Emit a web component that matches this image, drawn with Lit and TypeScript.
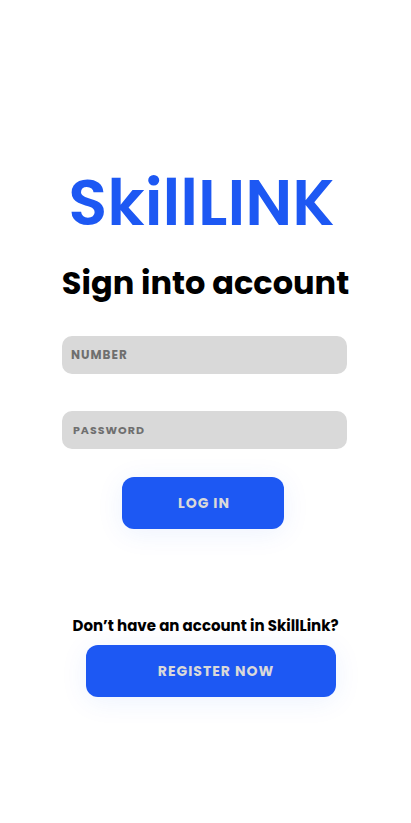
import { LitElement, html, css } from "lit";
import { customElement } from "lit/decorators.js";

@customElement("app-root")
export class AppRoot extends LitElement {
  static styles = css`
    :host {
      display: block;
      min-height: 100vh;
      background: #fff;
      color: #000;
      font-family: Poppins, Inter, "Open Sans", sans-serif;
    }
    * { box-sizing: border-box; margin: 0; }
    main {
      display: flex;
      flex-direction: column;
      align-items: center;
      padding: 155px 24px 48px;
      white-space: nowrap;
    }
    .brand {
      font-size: 64px;
      line-height: 96px;
      font-weight: 600;
      color: #1d58f3;
      margin-right: 8px;
    }
    .title {
      font-size: 32px;
      line-height: 48px;
      font-weight: 700;
      margin-top: 8px;
    }
    form {
      width: 100%;
      display: flex;
      flex-direction: column;
      align-items: center;
      margin-top: 29px;
      padding-right: 2px;
    }
    .field {
      width: 100%;
      max-width: 285px;
      height: 38px;
      border: 0;
      border-radius: 10px;
      padding: 0 9px;
      background: #d9d9d9;
      color: #333;
      font: 700 12px/18px Poppins, Inter, sans-serif;
      letter-spacing: 1px;
    }
    .field::placeholder { color: #6f6f6f; opacity: 1; }
    .password {
      margin-top: 37px;
      padding: 0 11px;
      font-size: 11px;
    }
    .button {
      width: 100%;
      height: 52px;
      border: 0;
      border-radius: 12px;
      background: #1d58f3;
      color: #d9d9d9;
      font: 700 14px/20px Poppins, Inter, sans-serif;
      letter-spacing: 1px;
      box-shadow: 0 4px 28px rgba(29, 88, 243, 0.08);
    }
    .login {
      max-width: 162px;
      margin: 28px 3px 0 0;
      padding: 0 0 0 2px;
    }
    .register {
      max-width: 250px;
      margin: 7px 0 0 11px;
      padding: 0 0 0 10px;
    }
    .prompt {
      font-size: 15px;
      line-height: 24px;
      font-weight: 700;
      margin-top: 85px;
    }
  `;

  render() {
    return html`
      <main>
        <h1 class="brand">SkillLINK</h1>
        <h2 class="title">Sign into account</h2>
        <form>
          <input class="field" type="text" placeholder="NUMBER" aria-label="Number" />
          <input class="field password" type="password" placeholder="PASSWORD" aria-label="Password" />
          <button class="button login" type="button">LOG IN</button>
        </form>
        <p class="prompt">Don’t have an account in SkillLink?</p>
        <button class="button register" type="button">REGISTER NOW</button>
      </main>
    `;
  }
}
